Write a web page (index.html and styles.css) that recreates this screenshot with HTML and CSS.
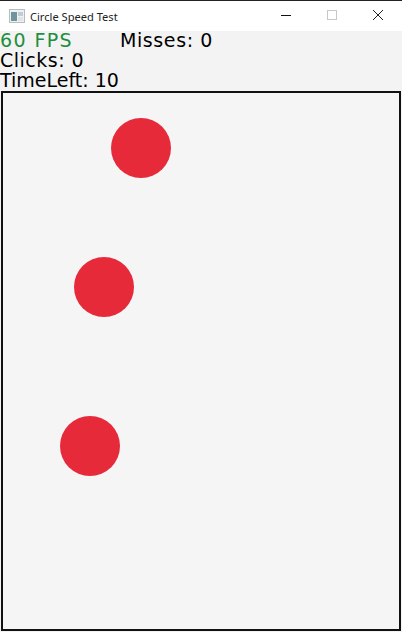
FILE: index.html
```html
<!DOCTYPE html>
<html lang="en">
<head>
    <meta charset="UTF-8">
    <title>Circle Speed Test</title>
    <link rel="stylesheet" href="styles.css">
</head>
<body>

<div class="window">
    <header class="titlebar">
        <svg class="app-icon" width="16" height="16" viewBox="0 0 16 16">
            <rect x="0.5" y="1.5" width="15" height="13" fill="#eef1f2" stroke="#b4bdc0"/>
            <rect x="2" y="4" width="6" height="9" fill="#6f949a"/>
            <rect x="9" y="4" width="5" height="4" fill="#c3ccd0"/>
            <rect x="9" y="9" width="5" height="4" fill="#dfe4e6"/>
        </svg>
        <span class="title">Circle Speed Test</span>
        <div class="controls">
            <svg class="control" width="46" height="30" viewBox="0 0 46 30">
                <path d="M18 14.5h10" stroke="#111" fill="none"/>
            </svg>
            <svg class="control" width="46" height="30" viewBox="0 0 46 30">
                <rect x="18.5" y="9.5" width="9" height="9" stroke="#c8c8c8" fill="none"/>
            </svg>
            <svg class="control" width="46" height="30" viewBox="0 0 46 30">
                <path d="M18 9l10 10M28 9l-10 10" stroke="#222" fill="none"/>
            </svg>
        </div>
    </header>

    <section class="stats">
        <div class="stat-row">
            <span class="fps">60 FPS</span>
            <span class="misses">Misses: 0</span>
        </div>
        <div class="stat-row clicks">Clicks: 0</div>
        <div class="stat-row">TimeLeft: 10</div>
    </section>

    <main class="playfield">
        <div class="circle circle-one"></div>
        <div class="circle circle-two"></div>
        <div class="circle circle-three"></div>
    </main>
</div>

</body>
</html>
```

FILE: styles.css
```css
html, body {
    margin: 0;
    padding: 0;
}
body {
    width: 402px;
    height: 632px;
    overflow: hidden;
    background-color: #f3f3f3;
    font-family: "DejaVu Sans", sans-serif;
}
.window {
    display: flex;
    flex-direction: column;
    height: 632px;
    box-sizing: border-box;
    border-top: 1px solid #222;
}
.titlebar {
    display: flex;
    align-items: center;
    height: 30px;
    padding-left: 9px;
    background-color: #ffffff;
}
.app-icon {
    margin-right: 5px;
}
.title {
    font-family: "Noto Sans", sans-serif;
    font-size: 11.1px;
    color: #222;
}
.controls {
    display: flex;
    margin-left: auto;
    margin-right: 1px;
}
.stats {
    height: 60px;
    font-size: 19px;
    color: #000;
}
.stat-row {
    display: flex;
    height: 20px;
    line-height: 18px;
    white-space: nowrap;
}
.fps {
    width: 120px;
    color: #1f8f3f;
    letter-spacing: 1.4px;
}
.misses {
    letter-spacing: 0.6px;
}
.clicks {
    letter-spacing: 0.5px;
}
.playfield {
    position: relative;
    flex: 1;
    margin: 0 1px 1px;
    border: 2px solid #111;
    background-color: #f5f5f5;
}
.circle {
    position: absolute;
    width: 60px;
    height: 60px;
    border-radius: 50%;
    background-color: #e62a3a;
}
.circle-one {
    left: 108px;
    top: 25px;
}
.circle-two {
    left: 71px;
    top: 164px;
}
.circle-three {
    left: 57px;
    top: 323px;
}
```
